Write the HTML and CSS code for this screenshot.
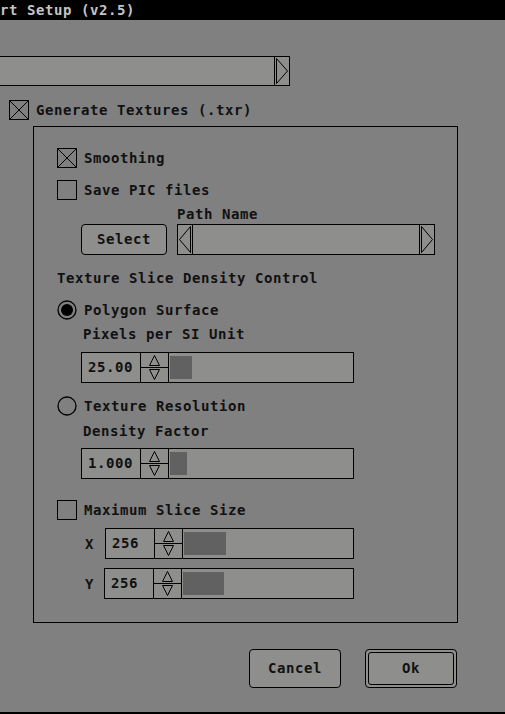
FILE: index.html
```html
<!DOCTYPE html>
<html>
<head>
<meta charset="utf-8">
<title>Setup</title>
<link rel="stylesheet" href="styles.css">
</head>
<body>
<div class="window">
  <div class="titlebar">rt Setup (v2.5)</div>

  <div class="combo">
    <div class="combo-text"></div>
    <div class="arrow-btn arrow-right">
      <svg width="14" height="28" viewBox="0 0 14 28"><path d="M1.5 1.5 L12.5 14 L1.5 26.5 Z" fill="none" stroke="#000"/></svg>
    </div>
  </div>

  <div class="check-row gen-row">
    <svg class="box" width="20" height="20" viewBox="0 0 20 20"><rect x="0.5" y="0.5" width="19" height="19" fill="none" stroke="#000"/><path d="M1 1L19 19M19 1L1 19" stroke="#000"/></svg>
    <span>Generate Textures (.txr)</span>
  </div>

  <div class="group">
    <div class="check-row smooth-row">
      <svg class="box" width="20" height="20" viewBox="0 0 20 20"><rect x="0.5" y="0.5" width="19" height="19" fill="none" stroke="#000"/><path d="M1 1L19 19M19 1L1 19" stroke="#000"/></svg>
      <span>Smoothing</span>
    </div>
    <div class="check-row pic-row">
      <svg class="box" width="20" height="20" viewBox="0 0 20 20"><rect x="0.5" y="0.5" width="19" height="19" fill="none" stroke="#000"/></svg>
      <span>Save PIC files</span>
    </div>

    <div class="path-row">
      <div class="btn select-btn">Select</div>
      <div class="path-col">
        <div class="path-label">Path Name</div>
        <div class="path-field">
          <div class="arrow-btn arrow-left">
            <svg width="14" height="29" viewBox="0 0 14 29"><path d="M12.5 1.5 L1.5 14.5 L12.5 27.5 Z" fill="none" stroke="#000"/></svg>
          </div>
          <div class="path-text"></div>
          <div class="arrow-btn arrow-right">
            <svg width="14" height="29" viewBox="0 0 14 29"><path d="M1.5 1.5 L12.5 14.5 L1.5 27.5 Z" fill="none" stroke="#000"/></svg>
          </div>
        </div>
      </div>
    </div>

    <div class="section-label">Texture Slice Density Control</div>

    <div class="radio-row first-radio">
      <svg class="radio" width="20" height="20" viewBox="0 0 20 20"><circle cx="10" cy="10" r="9" fill="none" stroke="#000" stroke-width="1.3"/><circle cx="10" cy="10" r="6" fill="#000"/></svg>
      <span>Polygon Surface</span>
    </div>
    <div class="sub-label sub-first">Pixels per SI Unit</div>
    <div class="spin spin-main spin-first">
      <div class="val val-wide">25.00</div>
      <div class="arrows">
        <svg width="27" height="29" viewBox="0 0 27 29"><path d="M13.5 2.5 L18.5 12.5 L8.5 12.5 Z M13.5 26.5 L18.5 16.5 L8.5 16.5 Z" fill="none" stroke="#000"/><path d="M0 14.5 H27" stroke="#000"/></svg>
      </div>
      <div class="track"><div class="thumb" style="width:22px"></div></div>
    </div>

    <div class="radio-row second-radio">
      <svg class="radio" width="20" height="20" viewBox="0 0 20 20"><circle cx="10" cy="10" r="9" fill="none" stroke="#000" stroke-width="1.3"/></svg>
      <span>Texture Resolution</span>
    </div>
    <div class="sub-label sub-second">Density Factor</div>
    <div class="spin spin-main spin-second">
      <div class="val val-wide">1.000</div>
      <div class="arrows">
        <svg width="27" height="29" viewBox="0 0 27 29"><path d="M13.5 2.5 L18.5 12.5 L8.5 12.5 Z M13.5 26.5 L18.5 16.5 L8.5 16.5 Z" fill="none" stroke="#000"/><path d="M0 14.5 H27" stroke="#000"/></svg>
      </div>
      <div class="track"><div class="thumb" style="width:17px"></div></div>
    </div>

    <div class="check-row max-row">
      <svg class="box" width="20" height="20" viewBox="0 0 20 20"><rect x="0.5" y="0.5" width="19" height="19" fill="none" stroke="#000"/></svg>
      <span>Maximum Slice Size</span>
    </div>

    <div class="axis-row axis-x">
      <div class="axis-label">X</div>
      <div class="spin spin-axis">
        <div class="val val-narrow">256</div>
        <div class="arrows">
          <svg width="27" height="29" viewBox="0 0 27 29"><path d="M13.5 2.5 L18.5 12.5 L8.5 12.5 Z M13.5 26.5 L18.5 16.5 L8.5 16.5 Z" fill="none" stroke="#000"/><path d="M0 14.5 H27" stroke="#000"/></svg>
        </div>
        <div class="track"><div class="thumb" style="width:42px"></div></div>
      </div>
    </div>
    <div class="axis-row axis-y">
      <div class="axis-label">Y</div>
      <div class="spin spin-axis">
        <div class="val val-narrow">256</div>
        <div class="arrows">
          <svg width="27" height="29" viewBox="0 0 27 29"><path d="M13.5 2.5 L18.5 12.5 L8.5 12.5 Z M13.5 26.5 L18.5 16.5 L8.5 16.5 Z" fill="none" stroke="#000"/><path d="M0 14.5 H27" stroke="#000"/></svg>
        </div>
        <div class="track"><div class="thumb" style="width:41px"></div></div>
      </div>
    </div>
  </div>

  <div class="buttons">
    <div class="btn dlg-btn">Cancel</div>
    <div class="btn dlg-btn ok-btn"><div class="ok-inner">Ok</div></div>
  </div>
</div>
</body>
</html>
```

FILE: styles.css
```css
* { box-sizing: border-box; }
html, body { margin: 0; padding: 0; }
body {
  width: 505px;
  height: 714px;
  overflow: hidden;
  background: #808080;
  font-family: "DejaVu Sans Mono", "Liberation Mono", monospace;
  font-weight: bold;
  font-size: 14px;
  letter-spacing: 0.57px;
  color: #111;
}
.window {
  height: 714px;
  display: flex;
  flex-direction: column;
  border-bottom: 2px solid #000;
}
.titlebar {
  height: 20px;
  flex: none;
  background: #000;
  color: #c4c4c4;
  line-height: 20px;
  white-space: nowrap;
}
.combo {
  margin-top: 36px;
  width: 290px;
  height: 30px;
  flex: none;
  border: 1px solid #000;
  border-left: none;
  background: #8e8e8c;
  display: flex;
}
.combo-text, .path-text { flex: 1; }
.arrow-btn { width: 15px; display: flex; flex: none; }
.arrow-btn svg { display: block; }
.arrow-right { border-left: 1px solid #000; }
.arrow-left { border-right: 1px solid #000; }

.check-row, .radio-row {
  display: flex;
  align-items: center;
  gap: 7px;
  height: 20px;
  flex: none;
  white-space: nowrap;
}
.box, .radio { display: block; flex: none; }
.gen-row { margin-top: 14px; padding-left: 9px; }

.group {
  margin-top: 6px;
  margin-left: 33px;
  width: 425px;
  height: 497px;
  flex: none;
  border: 1px solid #000;
  padding-left: 23px;
  display: flex;
  flex-direction: column;
}
.smooth-row { margin-top: 21px; }
.pic-row { margin-top: 12px; }

.path-row {
  margin-top: 4px;
  margin-left: 24px;
  display: flex;
  align-items: flex-end;
}
.btn {
  background: #8e8e8c;
  border: 1px solid #000;
  border-radius: 4px;
  display: flex;
  align-items: center;
  justify-content: center;
  padding-bottom: 2px;
}
.select-btn { width: 86px; height: 31px; }
.path-col { margin-left: 10px; width: 258px; }
.path-label { height: 20px; line-height: 20px; }
.path-field {
  height: 31px;
  border: 1px solid #000;
  background: #8e8e8c;
  display: flex;
}

.section-label { margin-top: 13px; height: 20px; line-height: 20px; flex: none; }
.first-radio { margin-top: 12px; }
.second-radio { margin-top: 13px; }
.sub-label { margin-left: 26px; height: 20px; line-height: 20px; flex: none; }
.sub-first { margin-top: 4px; }
.sub-second { margin-top: 5px; }

.spin {
  height: 31px;
  flex: none;
  border: 1px solid #000;
  background: #8e8e8c;
  display: flex;
}
.spin-main { margin-left: 24px; width: 273px; }
.spin-first { margin-top: 8px; }
.spin-second { margin-top: 7px; }
.val {
  border-right: 1px solid #000;
  line-height: 29px;
  padding-left: 6px;
  flex: none;
}
.val-wide { width: 59px; }
.val-narrow { width: 49px; }
.arrows { width: 28px; border-right: 1px solid #000; flex: none; }
.arrows svg { display: block; }
.track { flex: 1; padding: 3px 1px; }
.thumb { height: 100%; background: #616161; }

.max-row { margin-top: 21px; }
.axis-row { display: flex; align-items: center; margin-left: 28px; flex: none; }
.axis-x { margin-top: 8px; }
.axis-y { margin-top: 9px; }
.axis-label { line-height: 20px; }
.axis-x .axis-label { width: 20px; }
.axis-y .axis-label { width: 19px; }
.axis-x .spin-axis { width: 249px; }
.axis-y .spin-axis { width: 250px; }

.buttons {
  margin-top: 26px;
  display: flex;
  justify-content: flex-end;
  gap: 24px;
  padding-right: 48px;
}
.dlg-btn { width: 92px; height: 39px; }
.ok-btn { padding: 2px; display: block; }
.ok-inner {
  height: 100%;
  border: 1px solid #000;
  border-radius: 3px;
  display: flex;
  align-items: center;
  justify-content: center;
  padding-bottom: 1px;
}
```
